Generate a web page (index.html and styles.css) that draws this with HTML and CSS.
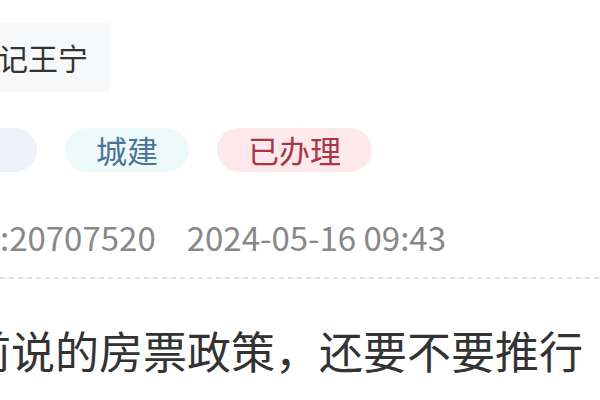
FILE: index.html
```html
<!DOCTYPE html>
<html lang="zh-CN">
<head>
<meta charset="utf-8">
<link rel="stylesheet" href="styles.css">
</head>
<body>
<div class="card">
  <div class="author">书记王宁</div>
  <div class="tags">
    <span class="tag tag-type">咨询</span>
    <span class="tag tag-dept">城建</span>
    <span class="tag tag-done">已办理</span>
  </div>
  <div class="meta"><span class="meta-id">编号:20707520</span><span class="meta-time">2024-05-16 09:43</span></div>
  <div class="divider"></div>
  <div class="content">前说的房票政策，还要不要推行</div>
</div>
</body>
</html>
```
FILE: styles.css
```css
html, body {
  margin: 0;
  padding: 0;
  background: #ffffff;
  overflow: hidden;
}
body {
  width: 600px;
  height: 400px;
  font-family: "Noto Sans CJK SC", "Noto Sans", sans-serif;
  color: #333333;
}
.card {
  display: flex;
  flex-direction: column;
  align-items: flex-start;
  padding-top: 23px;
}
.author {
  height: 69px;
  line-height: 69px;
  margin-left: -54px;
  padding: 0 22px;
  font-size: 30px;
  background: #f7f8fa;
  color: #333333;
  white-space: nowrap;
}
.tags {
  display: flex;
  gap: 28px;
  margin-top: 36px;
  margin-left: -87px;
}
.tag {
  height: 44px;
  line-height: 44px;
  padding: 0 31px;
  border-radius: 22px;
  font-size: 31px;
  white-space: nowrap;
}
.tag-type {
  background: #eff1fa;
  color: #eff1fa;
}
.tag-dept {
  background: #eefafa;
  color: #4a7596;
}
.tag-done {
  background: #fde9ec;
  color: #ab3546;
}
.meta {
  display: flex;
  gap: 31px;
  margin-top: 45px;
  margin-left: -66px;
  height: 40px;
  line-height: 40px;
  font-size: 33px;
  color: #888888;
  white-space: nowrap;
}
.divider {
  align-self: stretch;
  height: 2px;
  margin-top: 20px;
  background: repeating-linear-gradient(to right, #e2e2e2 0 5px, transparent 5px 9px);
}
.content {
  margin-top: 43px;
  margin-left: -33px;
  height: 56px;
  line-height: 56px;
  font-size: 44px;
  color: #333333;
  white-space: nowrap;
}
```
